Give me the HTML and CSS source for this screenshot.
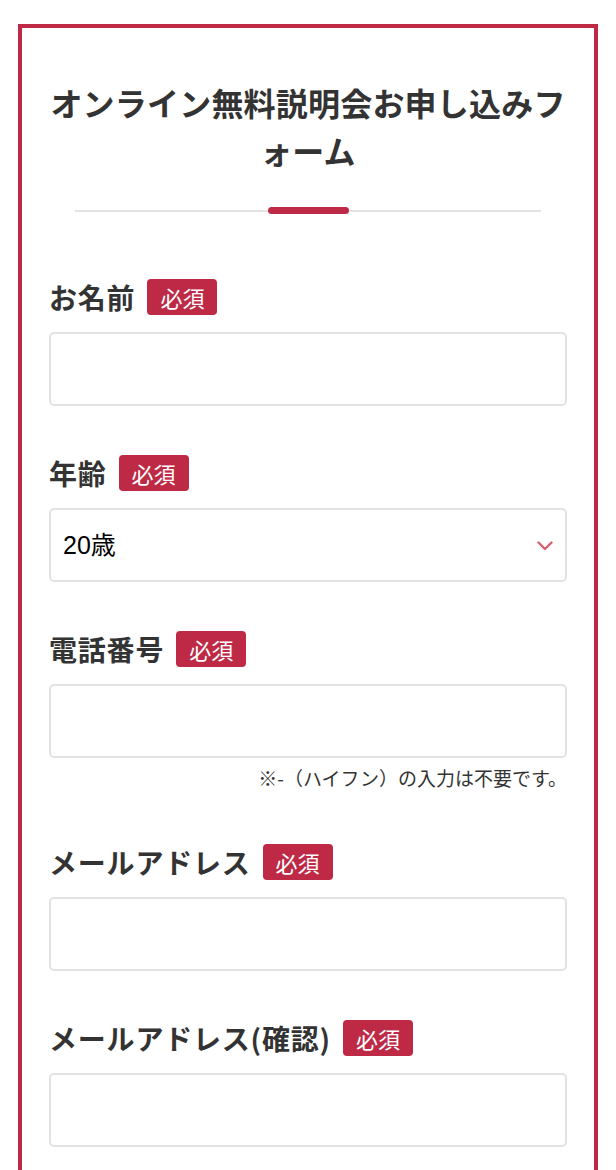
FILE: index.html
```html
<!DOCTYPE html>
<html lang="ja">
<head>
    <meta charset="UTF-8">
    <meta name="viewport" content="width=device-width, initial-scale=1.0">
    <title>オンライン無料説明会お申し込みフォーム</title>
    <link rel="stylesheet" href="styles.css">
</head>
<body>
  <div id="entry">
    <h2 class="form-title">オンライン無料説明会お申し込みフォーム</h2>
    <div class="title-line"><span></span></div>

    <form class="entry-form">
      <div class="field">
        <label class="field-label" for="name">お名前<span class="required">必須</span></label>
        <input class="field-input" type="text" id="name" name="name">
      </div>

      <div class="field">
        <label class="field-label" for="age">年齢<span class="required">必須</span></label>
        <div class="select-wrap">
          <select class="field-input field-select" id="age" name="age">
            <option>20歳</option>
            <option>21歳</option>
            <option>22歳</option>
          </select>
          <svg class="select-arrow" width="16" height="10" viewBox="0 0 16 10">
            <path d="M1.5 1.5 L8 8 L14.5 1.5" fill="none" stroke="#d9606f" stroke-width="2.4" stroke-linecap="round" stroke-linejoin="round"/>
          </svg>
        </div>
      </div>

      <div class="field">
        <label class="field-label" for="tel">電話番号<span class="required">必須</span></label>
        <input class="field-input" type="tel" id="tel" name="tel">
        <p class="field-note">※-（ハイフン）の入力は不要です。</p>
      </div>

      <div class="field">
        <label class="field-label" for="mail">メールアドレス<span class="required">必須</span></label>
        <input class="field-input" type="email" id="mail" name="mail">
      </div>

      <div class="field">
        <label class="field-label" for="mail2">メールアドレス(確認)<span class="required">必須</span></label>
        <input class="field-input" type="email" id="mail2" name="mail2">
      </div>
    </form>
  </div>
</body>
</html>
```

FILE: styles.css
```css
body {
  margin: 0;
  font-family: "Noto Sans CJK JP", "Noto Sans", sans-serif;
  color: #333;
  background: #fff;
}
#entry {
  margin: 24px 18px 0;
  border: 4px solid #be2a46;
  padding: 50px 27px 60px;
}
.form-title {
  margin: 0;
  font-size: 32px;
  line-height: 48px;
  font-weight: bold;
  text-align: center;
  letter-spacing: 0.2px;
  line-break: loose;
}
.title-line {
  width: 90%;
  height: 7px;
  margin: 33px auto 0;
  display: flex;
  justify-content: center;
  background: linear-gradient(#e3e3e3, #e3e3e3) center / 100% 2px no-repeat;
}
.title-line span {
  width: 81px;
  height: 7px;
  border-radius: 4px;
  background: #be2a46;
}
.entry-form {
  margin-top: 65px;
}
.field {
  margin-bottom: 49px;
}
.field-label {
  display: flex;
  align-items: center;
  font-size: 28px;
  font-weight: bold;
  letter-spacing: 0.8px;
  line-height: 36px;
  margin-bottom: 17px;
}
.required {
  margin-left: 12px;
  padding: 0 13px;
  line-height: 36px;
  height: 36px;
  border-radius: 4px;
  background: #be2a46;
  color: #fff;
  font-size: 22px;
  font-weight: normal;
  letter-spacing: 0;
}
.field-input {
  display: block;
  box-sizing: border-box;
  width: 100%;
  height: 74px;
  margin: 0;
  padding: 0 12px;
  border: 2px solid #e3e3e3;
  border-radius: 5px;
  background: #fff;
  font-family: inherit;
  font-size: 25px;
  color: #000;
}
.select-wrap {
  position: relative;
}
.field-select {
  appearance: none;
  -webkit-appearance: none;
  font-family: "Liberation Sans", "Noto Sans CJK JP", sans-serif;
}
.select-arrow {
  position: absolute;
  right: 14px;
  top: 33px;
  pointer-events: none;
}
.field-note {
  margin: 5px 0 0;
  padding-bottom: 3px;
  font-size: 19px;
  line-height: 29px;
  text-align: right;
  color: #333;
}
```
